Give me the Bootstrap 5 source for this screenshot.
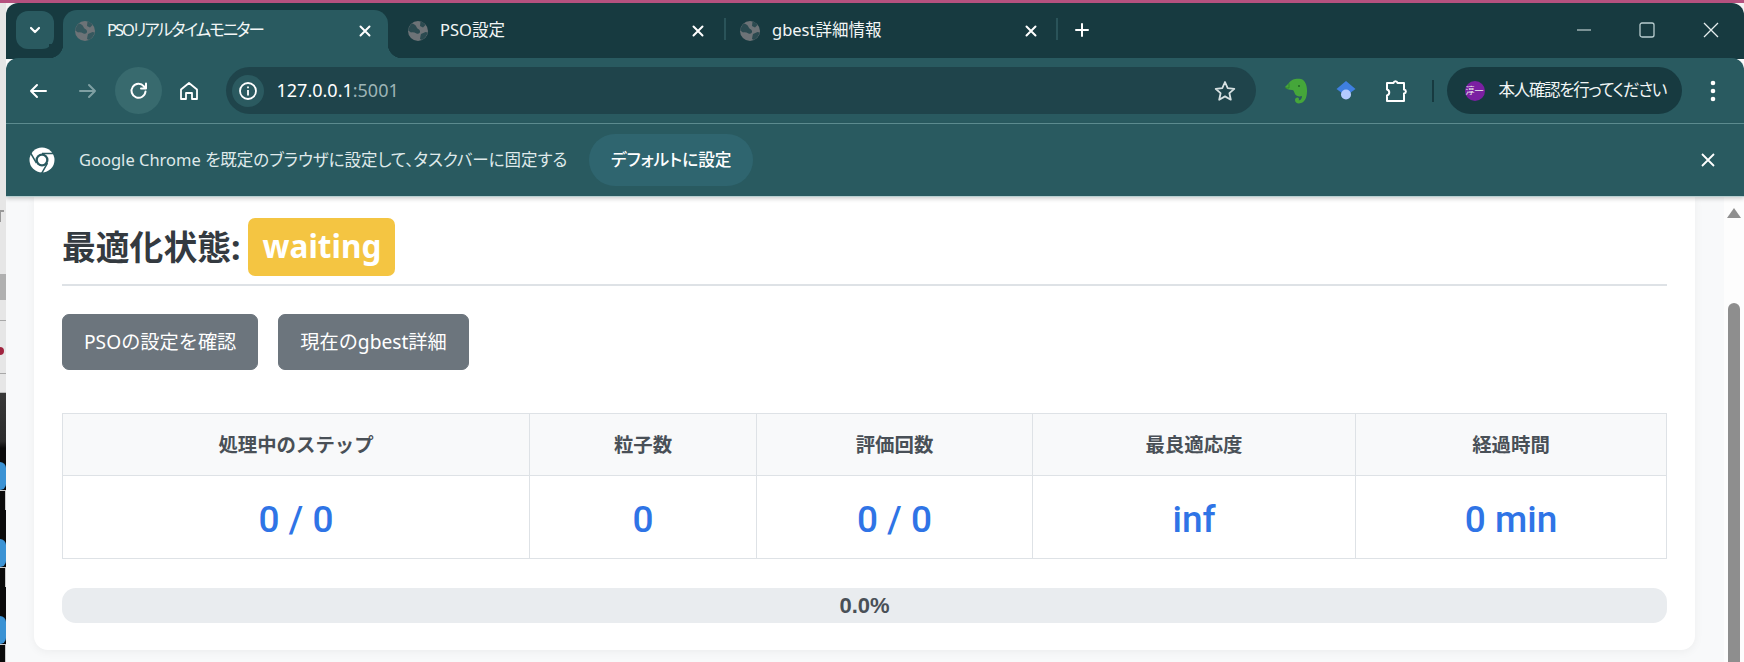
<!DOCTYPE html>
<html lang="ja">
<head>
<meta charset="utf-8">
<title>PSOリアルタイムモニター</title>
<link href="https://cdn.jsdelivr.net/npm/bootstrap@5.3.0/dist/css/bootstrap.min.css" rel="stylesheet">
<style>
html,body{height:662px;overflow:hidden}
body{background:#f3f3f3;font-family:"Noto Sans","Noto Sans CJK JP",sans-serif;font-feature-settings:"palt";color:#212529}
.topline{height:3px;background:#b5517f}
.shell{height:659px}
.desk{width:6px;flex:none;background:#e6e6e6;overflow:hidden}
.desk-light{height:390px;flex:none;border-bottom:1px solid #bbb}
.desk-f{margin-top:207px;height:12px;width:4px;border-top:2px solid #999;border-left:1px solid #999}
.desk-scrap{height:26px;margin-top:52px;background:#b0b0b0}
.desk-line{height:1px;background:#a8a8a8}
.desk-line-a{margin-top:20px}
.desk-line-b{margin-top:18px}
.desk-dot{width:4px;height:8px;border-radius:0 4px 4px 0;background:#a0243f;margin-top:26px}
.desk-dark{background:#0b0b0b;min-height:0;overflow:hidden}
.desk-fade{height:69px;background:linear-gradient(#383838 0,#2c2c2c 70%,#0b0b0b 80%)}
.desk-chip{height:28px;background:#3c93d4;border-radius:0 6px 6px 0}
.desk-sketch{height:20px;margin-bottom:29px;border-top:1px solid #ccc;border-right:1px solid #ccc}
.win{min-width:0;background:#f8f9fa;border-radius:12px 12px 0 0;overflow:hidden}
.tabstrip{height:56px;flex:none;background:#173a40;color:#fff;padding:0 1.5px 0 10px;font-size:16.5px}
.tabdrop{width:38px;height:38px;margin-top:8px;background:#2a5a60;border-radius:12px;margin-right:9px}
.chrometab{height:48px;margin-top:7px;padding:0 0 7px 12px;position:relative;color:#f2f6f6}
.tab-a{width:325px;background:#295a60;border-radius:14px 14px 0 0}
.tab-a::before,.tab-a::after{content:"";position:absolute;bottom:0;width:14px;height:14px}
.tab-a::before{left:-14px;background:radial-gradient(circle at 0 0,#173a40 14px,#295a60 14.5px)}
.tab-a::after{right:-14px;background:radial-gradient(circle at 100% 0,#173a40 14px,#295a60 14.5px)}
.tab-a .tab-title{letter-spacing:-2px}
.tab-b{width:327.5px;margin-left:8px}
.tab-c{width:330.5px;padding-left:14.5px}
.tab-title{flex:1;white-space:nowrap;margin-left:12px}
.tab-x{width:14px;height:14px;margin-right:16px;flex:none}
.tab-b .tab-x,.tab-c .tab-x{margin-right:18.5px}
.tab-sepbox{height:22px;margin-top:15px;width:2px;background:#2a5359;flex:none}
.newtab{width:16px;height:16px;margin:19px 0 0 16px}
.winctl{width:63.5px;height:54px}
.toolrow{height:65px;flex:none;background:#295a60;color:#fff;padding:0 8px;border-radius:12px 12px 0 0;margin-top:-1px;gap:3.5px;position:relative}
.tb{width:47px;height:47px;border-radius:50%;flex:none}
.tb-on{background:#386a6e}
.addr{flex:1;height:47px;background:#1f444b;border-radius:24px;margin-left:9.5px;margin-right:15px;padding-left:6px;font-size:18px;color:#fff}
.addr-i{width:32px;height:32px;border-radius:50%;background:#2b5a60;margin-right:13px}
.port{color:#9db4b6}
.star{margin-left:auto;margin-right:19px}
.ext{width:50px;flex:none;margin-left:-3.5px}
.toolsep{width:2px;height:22px;background:#173a40;margin:0 9.5px 0 7px;flex:none}
.whoami{width:235px;height:47px;border-radius:24px;background:#173a40;font-size:16.5px;letter-spacing:-1.3px;color:#f2f6f6;padding-left:18px;flex:none;white-space:nowrap}
.avatar{width:20px;height:20px;border-radius:50%;background:#7b1fa2;font-size:9px;letter-spacing:0;color:#eee;margin-right:14px;flex:none}
.infobar{height:74px;flex:none;background:#295a60;border-top:1px solid #5c8b8f;border-bottom:1px solid #b6cfd0;color:#dfe9ea;font-size:16.5px;padding-left:23px;box-shadow:0 2px 4px rgba(0,0,0,.18);position:relative}
.logo{width:26px;height:26px;margin-right:24px;flex:none}
.defbtn{height:52px;width:164px;border-radius:26px;background:#2f656f;color:#fff;font-size:16.7px;font-weight:500;margin-left:22px}
.info-x{margin-left:auto;margin-right:28px}
.pagebody{height:465px;min-height:0}
.pagemain{flex:1;padding-left:28px;padding-right:29px;min-width:0}
.sheet{background:#fff;border-radius:0 0 14px 14px;padding:21px 28px 28px;box-shadow:0 2px 10px rgba(0,0,0,.05);height:453px}
.stateline{border-bottom:2px solid #dee2e6;padding-bottom:8px;margin-bottom:28px;gap:8px}
.statehead{font-size:33.8px;font-weight:700;margin:0;color:#343a40;line-height:58px}
.statebadge{background:#f4c542;color:#fff;border-radius:7px;font-size:31.5px;font-weight:700;height:58px;width:147px;padding:0;line-height:56px}
.pagebtn{height:56px;background:#6c757d;border-color:#6c757d;color:#fff;font-size:19.2px;border-radius:7px;padding:0 21px;line-height:54px}
.btnrow{gap:20px;margin-bottom:43px}
.stat{table-layout:fixed;margin-bottom:29px;border-color:#dee2e6}
.stat th{height:62px;background:#f8f9fa;color:#495057;font-size:19.4px;font-weight:700;text-align:center;vertical-align:middle;padding:0;font-feature-settings:normal}
.stat td{height:83px;color:#2f74e6;font-family:Roboto,"Noto Sans",sans-serif;font-size:37px;font-weight:500;text-align:center;vertical-align:middle;padding:6px 0 0}
.c1{width:467px}.c2{width:227px}.c3{width:276px}.c4{width:323px}
.bar{height:35px;border-radius:14px;background:#e9ecef;overflow:visible}
.bartext{width:100%;text-align:center;line-height:35px;font-family:"Liberation Sans",sans-serif;font-weight:700;font-size:22px;color:#495057}
.sbar{width:20px;flex:none;background:#fdfdfd;padding-top:11px}
.sb-up{width:0;height:0;border-left:7px solid transparent;border-right:7px solid transparent;border-bottom:10px solid #8f8f8f;margin:0 0 0 3px}
.sb-thumb{width:12px;height:400px;background:#8e8e8e;border-radius:6px;margin:85px 0 0 4px}
</style>
</head>
<body>
<div class="topline"></div>
<div class="shell d-flex">
  <div class="desk d-flex flex-column">
    <div class="desk-light">
      <div class="desk-f"></div>
      <div class="desk-scrap"></div>
      <div class="desk-line desk-line-a"></div>
      <div class="desk-dot"></div>
      <div class="desk-line desk-line-b"></div>
    </div>
    <div class="desk-dark flex-grow-1">
      <div class="desk-fade"></div>
      <div class="desk-chip"></div><div class="desk-sketch"></div>
      <div class="desk-chip"></div><div class="desk-sketch"></div>
      <div class="desk-chip"></div><div class="desk-sketch"></div>
    </div>
  </div>
  <div class="win flex-grow-1 d-flex flex-column">
    <div class="tabstrip d-flex">
      <div class="tabdrop d-flex align-items-center justify-content-center flex-shrink-0">
        <svg width="14" height="14" viewBox="0 0 14 14" fill="none" stroke="#fff" stroke-width="2.2" stroke-linecap="round" stroke-linejoin="round"><path d="M3 5l4 4 4-4"/></svg>
      </div>
      <div class="chrometab tab-a d-flex align-items-center flex-shrink-0">
        <svg width="20" height="20" viewBox="0 0 20 20" class="flex-shrink-0"><circle cx="10" cy="10" r="10" fill="#6d7377"/><path d="M4 2.500c2 .5 4 1.500 4.500 3.500s3 2 3.500 4-1.500 3.500-3.500 2.500S5 11 3 11.500L.3 9.500C.8 6.500 2 4 4 2.500zM12.500.5c2.500.5 4 2 5 3.500L15 6.500l-3-1.500zM13 13l4.500-2 2 .5c-.5 3-2.500 6-5.500 7.500l-2-1 .5-3z" fill="#36585e"/></svg>
        <span class="tab-title">PSOリアルタイムモニター</span>
        <svg class="tab-x" viewBox="0 0 14 14" stroke="#fff" stroke-width="2" stroke-linecap="round"><path d="M2.500 2.500l9 9M11.500 2.500l-9 9"/></svg>
      </div>
      <div class="chrometab tab-b d-flex align-items-center flex-shrink-0">
        <svg width="20" height="20" viewBox="0 0 20 20" class="flex-shrink-0"><circle cx="10" cy="10" r="10" fill="#6d7377"/><path d="M4 2.500c2 .5 4 1.500 4.500 3.500s3 2 3.500 4-1.500 3.500-3.500 2.500S5 11 3 11.500L.3 9.500C.8 6.500 2 4 4 2.500zM12.500.5c2.500.5 4 2 5 3.500L15 6.500l-3-1.500zM13 13l4.500-2 2 .5c-.5 3-2.500 6-5.500 7.500l-2-1 .5-3z" fill="#2b4a50"/></svg>
        <span class="tab-title">PSO設定</span>
        <svg class="tab-x" viewBox="0 0 14 14" stroke="#fff" stroke-width="2" stroke-linecap="round"><path d="M2.500 2.500l9 9M11.500 2.500l-9 9"/></svg>
      </div>
      <div class="tab-sepbox"></div>
      <div class="chrometab tab-c d-flex align-items-center flex-shrink-0">
        <svg width="20" height="20" viewBox="0 0 20 20" class="flex-shrink-0"><circle cx="10" cy="10" r="10" fill="#6d7377"/><path d="M4 2.500c2 .5 4 1.500 4.500 3.500s3 2 3.500 4-1.500 3.500-3.500 2.500S5 11 3 11.500L.3 9.500C.8 6.500 2 4 4 2.500zM12.500.5c2.500.5 4 2 5 3.500L15 6.500l-3-1.500zM13 13l4.500-2 2 .5c-.5 3-2.500 6-5.500 7.500l-2-1 .5-3z" fill="#2b4a50"/></svg>
        <span class="tab-title">gbest詳細情報</span>
        <svg class="tab-x" viewBox="0 0 14 14" stroke="#fff" stroke-width="2" stroke-linecap="round"><path d="M2.500 2.500l9 9M11.500 2.500l-9 9"/></svg>
      </div>
      <div class="tab-sepbox"></div>
      <svg class="newtab flex-shrink-0" viewBox="0 0 16 16" stroke="#fff" stroke-width="2" stroke-linecap="round"><path d="M8 2v12M2 8h12"/></svg>
      <div class="ms-auto d-flex">
        <div class="winctl d-flex align-items-center justify-content-center"><svg width="16" height="16" viewBox="0 0 16 16" stroke="#dfe9ea" stroke-width="1.2"><path d="M1 8h14"/></svg></div>
        <div class="winctl d-flex align-items-center justify-content-center"><svg width="16" height="16" viewBox="0 0 16 16" fill="none" stroke="#b9cdcf" stroke-width="1.3"><rect x="1" y="1" width="14" height="14" rx="2"/></svg></div>
        <div class="winctl d-flex align-items-center justify-content-center"><svg width="16" height="16" viewBox="0 0 16 16" stroke="#e6eeee" stroke-width="1.3"><path d="M1 1l14 14M15 1L1 15"/></svg></div>
      </div>
    </div>
    <div class="toolrow d-flex align-items-center">
      <div class="tb d-flex align-items-center justify-content-center"><svg width="20" height="20" viewBox="0 0 20 20" fill="none" stroke="#fff" stroke-width="2" stroke-linecap="round" stroke-linejoin="round"><path d="M18 10H3M9 4l-6 6 6 6"/></svg></div>
      <div class="tb d-flex align-items-center justify-content-center"><svg width="20" height="20" viewBox="0 0 20 20" fill="none" stroke="#7fa0a3" stroke-width="2" stroke-linecap="round" stroke-linejoin="round"><path d="M2 10h15M11 4l6 6-6 6"/></svg></div>
      <div class="tb tb-on d-flex align-items-center justify-content-center"><svg width="20" height="20" viewBox="0 0 20 20" fill="none" stroke="#fff" stroke-width="2" stroke-linecap="round" stroke-linejoin="round"><path d="M16.500 10.500a7 7 0 1 1-1.600-5.200L17 7.500M17 2.500v5h-5"/></svg></div>
      <div class="tb d-flex align-items-center justify-content-center"><svg width="20" height="20" viewBox="0 0 20 20" fill="none" stroke="#fff" stroke-width="1.800" stroke-linejoin="round"><path d="M10 2l8 6.500V18h-5v-6H7v6H2V8.500z"/></svg></div>
      <div class="addr d-flex align-items-center">
        <div class="addr-i d-flex align-items-center justify-content-center"><svg width="20" height="20" viewBox="0 0 20 20" fill="none" stroke="#fff" stroke-width="1.800"><circle cx="10" cy="10" r="8"/><path d="M10 9v5.500M10 5.500v1.700"/></svg></div>
        <span>127.0.0.1<span class="port">:5001</span></span>
        <svg class="star" width="24" height="24" viewBox="0 0 24 24" fill="none" stroke="#d6e0e1" stroke-width="1.800" stroke-linejoin="round"><path d="M12 3l2.700 6.100 6.600.7-4.900 4.400 1.400 6.500-5.800-3.300-5.800 3.300 1.400-6.500-4.900-4.400 6.600-.7z"/></svg>
      </div>
      <div class="ext d-flex justify-content-center"><svg width="24" height="26" viewBox="0 0 24 26"><path d="M5 5C7 1 13 0 17 1c4 1 6 6 6 12 0 6-2 11-6 12-3 1-6 0-6-3 0-2 2-3 3.500-2 1 1 .5 2 0 2 1.500 1 3.500-1 3.500-4-3 1-6 0-7-2-1-2-1-4-3-4-3 0-6-1-7-3z" fill="#45a63a"/><path d="M5 5.500v4.500M5 10H1" stroke="#2f7c2b" stroke-width=".8" fill="none"/><circle cx="15" cy="8" r="1.100" fill="#246b26"/></svg></div>
      <div class="ext d-flex justify-content-center"><svg width="20" height="20" viewBox="0 0 20 20"><path d="M10 0l9.500 8L10 15 .5 8z" fill="#3f7fe0"/><circle cx="10" cy="13.500" r="5" fill="#b5cbff"/></svg></div>
      <div class="ext d-flex justify-content-center"><svg width="24" height="24" viewBox="0 0 24 24" fill="none" stroke="#fff" stroke-width="2" stroke-linejoin="round"><path d="M3 4h6.500c.5-2.500 3.500-2.500 4 0H20v6.500c2.500.5 2.500 3.500 0 4V22H3v-5.500c3-1 3-5 0-6z"/></svg></div>
      <div class="toolsep"></div>
      <div class="whoami d-flex align-items-center"><div class="avatar d-flex align-items-center justify-content-center">淳一</div>本人確認を行ってください</div>
      <div class="tb d-flex align-items-center justify-content-center ms-1"><svg width="6" height="22" viewBox="0 0 6 22" fill="#fff"><circle cx="3" cy="3" r="2.300"/><circle cx="3" cy="11" r="2.300"/><circle cx="3" cy="19" r="2.300"/></svg></div>
    </div>
    <div class="infobar d-flex align-items-center">
      <svg class="logo" viewBox="0 0 26 26"><circle cx="13" cy="13" r="12.500" fill="#fff"/><circle cx="13" cy="13" r="6.500" fill="#295a60"/><circle cx="13" cy="13" r="4.200" fill="#fff"/><path d="M13 6.600H26M18.500 16.200L12 27.500M7.500 16.200L1 5" stroke="#295a60" stroke-width="1.500"/></svg>
      <span>Google Chrome を既定のブラウザに設定して、タスクバーに固定する</span>
      <div class="defbtn d-flex align-items-center justify-content-center">デフォルトに設定</div>
      <svg class="info-x" width="16" height="16" viewBox="0 0 16 16" stroke="#fff" stroke-width="1.800"><path d="M2 2l12 12M14 2L2 14"/></svg>
    </div>
    <div class="pagebody d-flex">
      <div class="pagemain">
        <div class="sheet">
          <div class="stateline d-flex align-items-center">
            <h2 class="statehead">最適化状態:</h2>
            <span class="badge statebadge">waiting</span>
          </div>
          <div class="btnrow d-flex">
            <button type="button" class="btn btn-secondary pagebtn">PSOの設定を確認</button>
            <button type="button" class="btn btn-secondary pagebtn">現在のgbest詳細</button>
          </div>
          <table class="table table-bordered stat">
            <thead><tr><th class="c1">処理中のステップ</th><th class="c2">粒子数</th><th class="c3">評価回数</th><th class="c4">最良適応度</th><th>経過時間</th></tr></thead>
            <tbody><tr><td>0 / 0</td><td>0</td><td>0 / 0</td><td>inf</td><td>0 min</td></tr></tbody>
          </table>
          <div class="progress bar"><div class="bartext">0.0%</div></div>
        </div>
      </div>
      <div class="sbar"><div class="sb-up"></div><div class="sb-thumb"></div></div>
    </div>
  </div>
</div>
<script src="https://cdn.jsdelivr.net/npm/bootstrap@5.3.0/dist/js/bootstrap.bundle.min.js"></script>
</body>
</html>
